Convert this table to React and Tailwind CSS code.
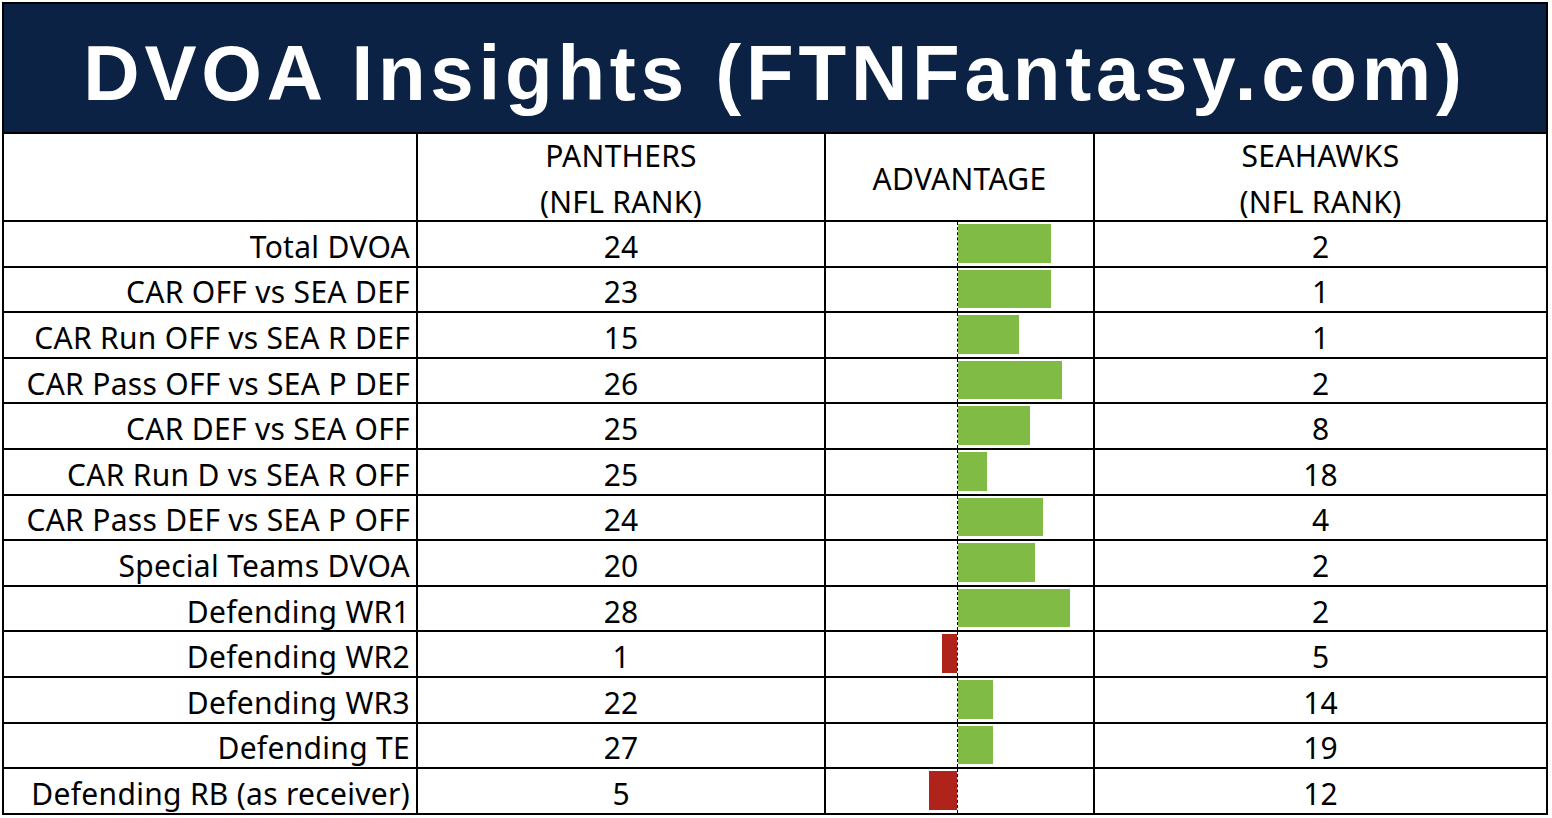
const rows = [
  { label: "Total DVOA", car: 24, sea: 2, bar: 93 },
  { label: "CAR OFF vs SEA DEF", car: 23, sea: 1, bar: 93 },
  { label: "CAR Run OFF vs SEA R DEF", car: 15, sea: 1, bar: 61 },
  { label: "CAR Pass OFF vs SEA P DEF", car: 26, sea: 2, bar: 104 },
  { label: "CAR DEF vs SEA OFF", car: 25, sea: 8, bar: 72 },
  { label: "CAR Run D vs SEA R OFF", car: 25, sea: 18, bar: 29 },
  { label: "CAR Pass DEF vs SEA P OFF", car: 24, sea: 4, bar: 85 },
  { label: "Special Teams DVOA", car: 20, sea: 2, bar: 77 },
  { label: "Defending WR1", car: 28, sea: 2, bar: 112 },
  { label: "Defending WR2", car: 1, sea: 5, bar: -15 },
  { label: "Defending WR3", car: 22, sea: 14, bar: 35 },
  { label: "Defending TE", car: 27, sea: 19, bar: 35 },
  { label: "Defending RB (as receiver)", car: 5, sea: 12, bar: -28 },
];

const cell = "border-r-2 border-b-2 border-black";

const App = () => {
  return (
    <div className="w-[1552px] h-[818px] bg-white overflow-hidden">
      <div
        className="ml-[2px] mt-[2px] w-[1546px] border-l-2 border-t-2 border-black text-black"
        style={{ fontFamily: "'Noto Sans', Lato, sans-serif" }}
      >
        {/* Title */}
        <div
          className="h-[130px] bg-[#0b2244] border-r-2 border-b-2 border-black flex items-center justify-center text-white font-bold text-[78px] tracking-[4.8px] pt-[10px]"
          style={{ fontFamily: "'Liberation Sans', Arial, sans-serif" }}
        >
          DVOA Insights (FTNFantasy.com)
        </div>

        <div className="grid grid-cols-[414px_408px_269px_453px]">
          {/* Header */}
          <div className={`${cell} h-[88px]`}></div>
          <div className={`${cell} h-[88px] flex flex-col items-center justify-center text-[30px] tracking-[0.3px] leading-[46px] pt-[3px]`}>
            <span>PANTHERS</span>
            <span>(NFL RANK)</span>
          </div>
          <div className={`${cell} h-[88px] flex items-center justify-center text-[30px] tracking-[0.3px] pt-[3px]`}>
            ADVANTAGE
          </div>
          <div className={`${cell} h-[88px] flex flex-col items-center justify-center text-[30px] tracking-[0.3px] leading-[46px] pt-[3px]`}>
            <span>SEAHAWKS</span>
            <span>(NFL RANK)</span>
          </div>

          {rows.map((r) => (
            <div key={r.label} className="contents">
              <div className={`${cell} h-[45.6px] flex items-center justify-end pr-[6px] pt-[5px] text-[30px] tracking-[0.3px] whitespace-nowrap`}>
                {r.label}
              </div>
              <div className={`${cell} h-[45.6px] flex items-center justify-center pt-[5px] text-[30px]`}>
                {r.car}
              </div>
              <div className={`${cell} h-[45.6px] flex`}>
                <div className="w-[131px] flex justify-end pt-[2px] pb-[3px]">
                  {r.bar < 0 && (
                    <div className="bg-[#b0231a]" style={{ width: `${-r.bar}px` }}></div>
                  )}
                </div>
                <div className="flex-1 border-l border-dashed border-black flex pt-[2px] pb-[3px]">
                  {r.bar > 0 && (
                    <div className="bg-[#80bc45]" style={{ width: `${r.bar}px` }}></div>
                  )}
                </div>
              </div>
              <div className={`${cell} h-[45.6px] flex items-center justify-center pt-[5px] text-[30px]`}>
                {r.sea}
              </div>
            </div>
          ))}
        </div>
      </div>
    </div>
  );
};

export default App;
